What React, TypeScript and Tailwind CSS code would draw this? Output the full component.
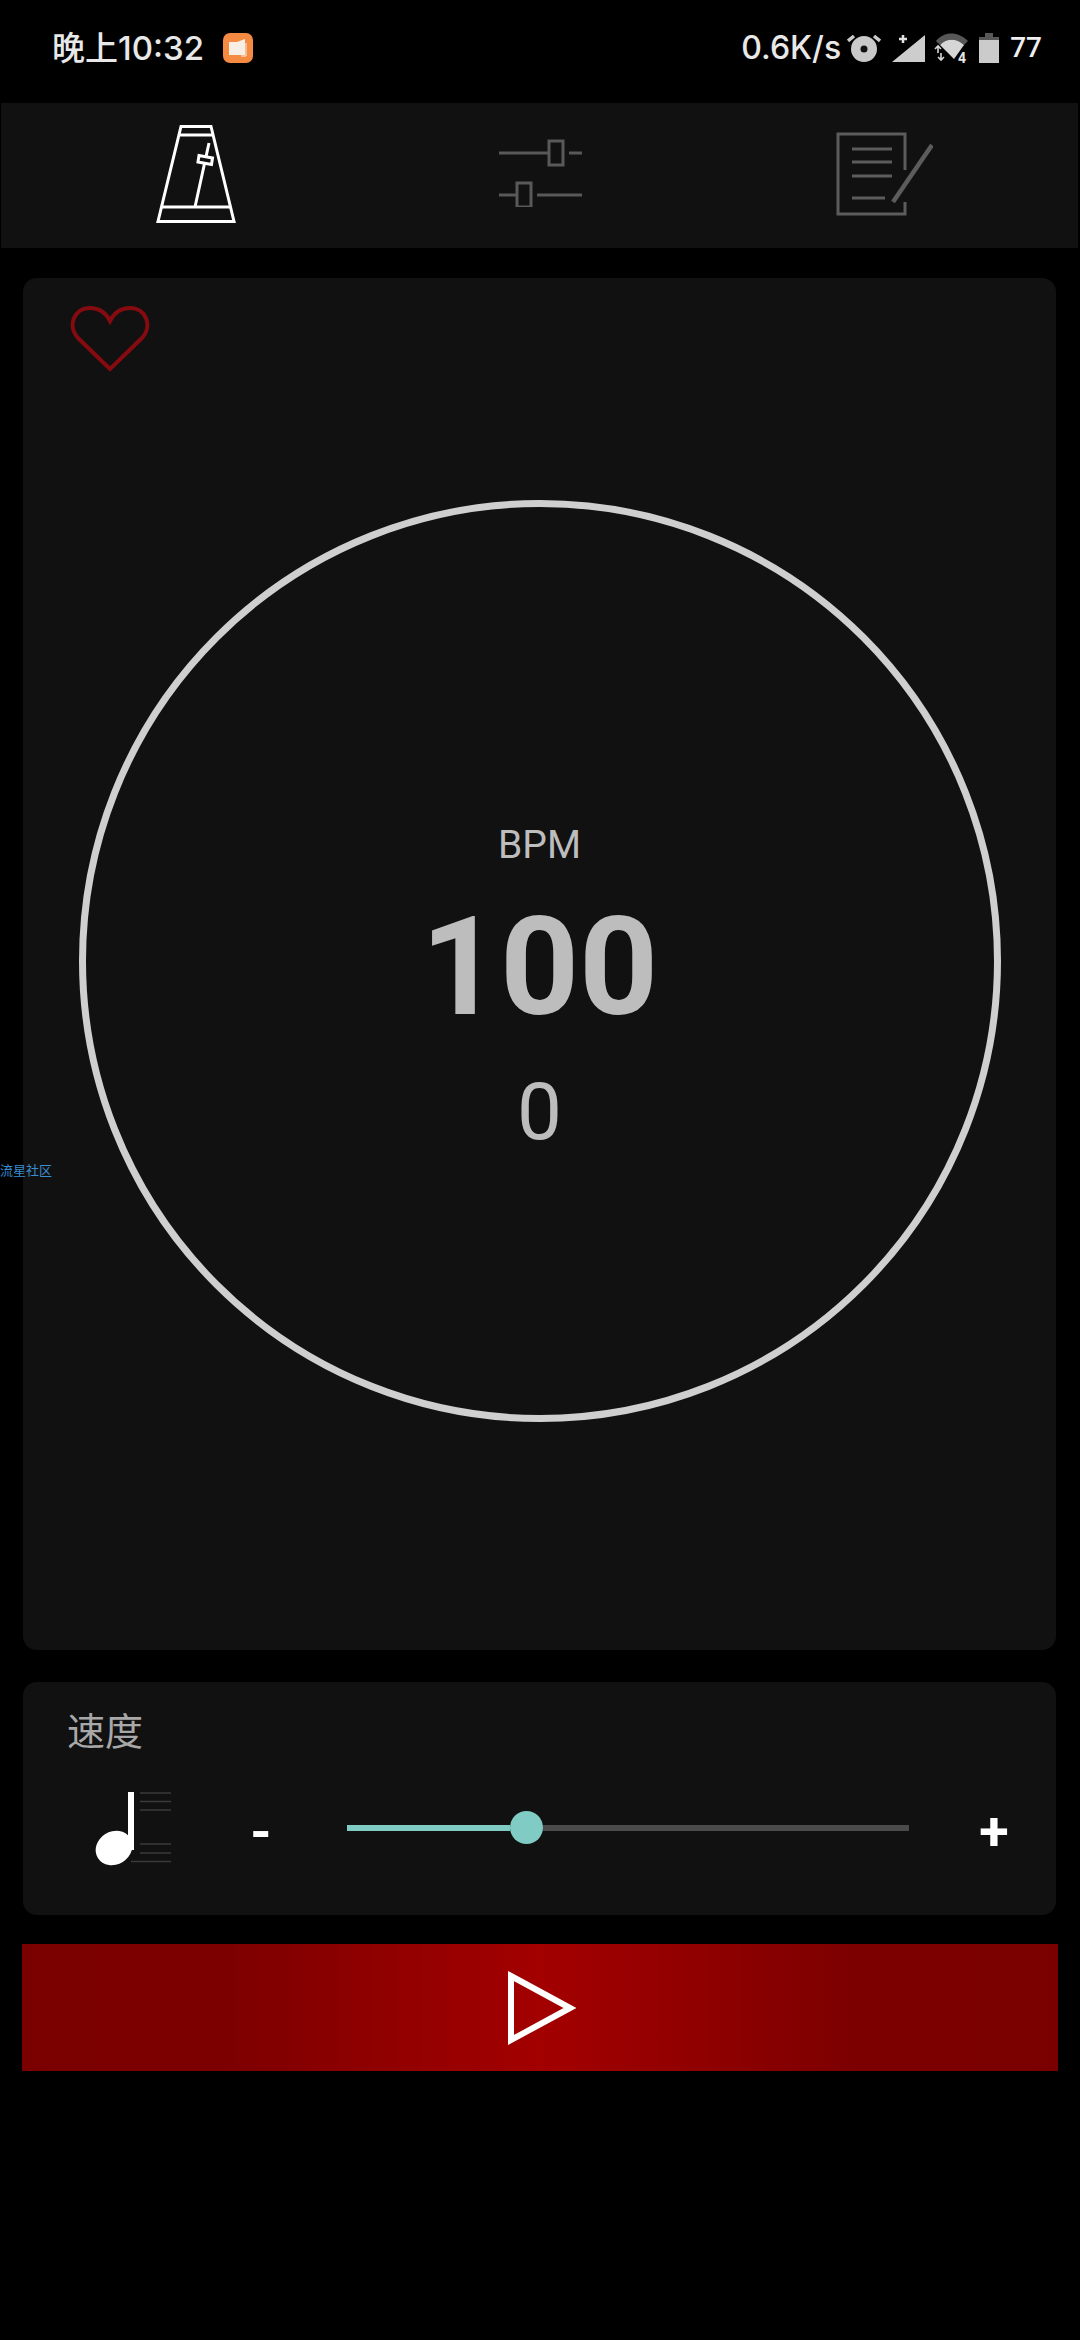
// App.tsx
export default function App() {
  return (
    <div className="relative w-[1080px] h-[2340px] bg-black overflow-hidden font-['Roboto',sans-serif]">
      <StatusBar />

      {/* Tabs */}
      <div className="flex items-center ml-[1px] mr-[2px] h-[145px] bg-[#111111]">
        <svg className="ml-[155px] mt-[-4px] shrink-0" width="80" height="98" viewBox="0 0 80 98" fill="none" stroke="#ffffff" strokeWidth="3">
          <path d="M25 1.5 H55 L78 96.5 H2 Z" />
          <path d="M23 10 H57 M6 82 H74 M39 82 L53 18" />
          <path d="M43 30.5 L56.5 33 L55.5 39.5 L42 37 Z" fill="#111111" />
        </svg>
        <svg className="ml-[263px] mt-[-5px] shrink-0" width="83" height="68" viewBox="0 0 83 68" fill="none" stroke="#595959" strokeWidth="3">
          <path d="M0 14 H50 M70 14 H83 M0 56 H17 M38 56 H83" />
          <rect x="50" y="2" width="14" height="24" />
          <rect x="18" y="44" width="14" height="24" />
        </svg>
        <svg className="ml-[254px] mt-[-4px] shrink-0" width="97" height="84" viewBox="0 0 97 84" fill="none" stroke="#5c5c5c" strokeWidth="3">
          <path d="M69 38 V2 H2 V82 H69 V70" />
          <path d="M16 17 H56 M16 30 H56 M16 44 H56 M16 66 H49" />
          <path d="M57 70 L96 13" strokeWidth="4.5" />
        </svg>
      </div>

      {/* Metronome dial */}
      <div className="flex flex-col mt-[30px] ml-[23px] w-[1033px] h-[1372px] rounded-[14px] bg-[#111111]">
        <svg className="ml-[47px] mt-[27px] shrink-0" width="80" height="68" viewBox="0 0 80 68" fill="none" stroke="#850b10" strokeWidth="4">
          <path d="M40 64 L8 33 C-3 21 4 3 20 3 C29 3 36 8 40 16 C44 8 51 3 60 3 C76 3 83 21 72 33 Z" />
        </svg>
        <div className="flex flex-col items-center mt-[127px] mx-auto w-[922px] h-[922px] rounded-full border-[7px] border-[#cfcfcf] text-[#bdbdbd]">
          <div className="mt-[315px] text-[39px] leading-[46px]">BPM</div>
          <div className="mt-[29px] text-[138px] leading-[140px] font-bold">100</div>
          <div className="mt-[35px] text-[80px] leading-[80px]">0</div>
        </div>
      </div>

      {/* Speed */}
      <div className="mt-[32px] ml-[23px] w-[1033px] h-[233px] rounded-[14px] bg-[#111111]">
        <div className="pt-[27px] pl-[44px] text-[38px] leading-[40px] text-[#a8a8a8] font-['Noto_Sans_CJK_SC',sans-serif]">速度</div>
        <div className="flex items-center mt-[43px] ml-[72px] h-[74px]">
          <NoteIcon />
          <div className="ml-[72px] mt-[6px] w-[36px] text-center text-[54px] leading-[54px] font-bold text-white">-</div>
          <div className="flex items-center ml-[68px] w-[562px] h-[33px] mt-[-3px]">
            <div className="w-[163px] h-[6px] bg-[#80cbc4]" />
            <div className="w-[33px] h-[33px] rounded-full bg-[#80cbc4] shrink-0" />
            <div className="flex-1 h-[6px] bg-[#4b4b4b]" />
          </div>
          <div className="ml-[61px] mt-[6px] w-[48px] text-center text-[54px] leading-[54px] font-bold text-white">+</div>
        </div>
      </div>

      {/* Play */}
      <div className="flex items-center justify-center mt-[29px] ml-[22px] w-[1036px] h-[127px] bg-[linear-gradient(90deg,#7a0000_0%,#7d0000_20%,#a30000_50%,#7d0000_80%,#7a0000_100%)]">
        <svg className="ml-[3px]" width="68" height="74" viewBox="0 0 68 74" fill="none" stroke="#ffffff" strokeWidth="6">
          <path d="M3 5 L62 37 L3 69 Z" />
        </svg>
      </div>

      <div className="absolute left-0 top-[1161px] text-[13px] leading-[18px] text-[#3b8ed0] font-['Noto_Sans_CJK_SC',sans-serif]">流星社区</div>
    </div>
  )
}

function StatusBar() {
  return (
    <div className="flex items-center h-[103px] pl-[52px] pr-[38px] pb-[7px] text-[#e8e8e8] font-['Inter','Noto_Sans_CJK_SC',sans-serif]">
      <div className="text-[33px] leading-[40px] font-medium">晚上10:32</div>
      <div className="flex items-center justify-center ml-[19px] w-[30px] h-[30px] rounded-[7px] bg-[#f58a42]">
        <svg width="20" height="20" viewBox="0 0 20 20">
          <path d="M1 4 L9 4 L17 1 V17 L9 17 H1 Z" fill="#f7efe6" />
          <path d="M13 18 H18 V5" fill="none" stroke="#f7efe6" strokeWidth="1" />
        </svg>
      </div>
      <div className="ml-auto text-[32px] leading-[40px] font-medium">0.6K/s</div>
      <svg className="ml-[6px]" width="34" height="28" viewBox="0 0 34 28">
        <circle cx="17" cy="15" r="13" fill="#c9c9c9" />
        <circle cx="17" cy="15" r="3.5" fill="#111111" />
        <path d="M1 7 L7 2 M33 7 L27 2" stroke="#c9c9c9" strokeWidth="3.5" />
      </svg>
      <svg className="ml-[11px]" width="33" height="28" viewBox="0 0 33 28">
        <path d="M0 28 L33 1 V28 Z" fill="#cdcdcd" />
        <path d="M11 1 V9 M7 5 H15" stroke="#e0e0e0" strokeWidth="2.5" />
      </svg>
      <svg className="ml-[8px]" width="37" height="32" viewBox="0 0 37 32" fill="none">
        <path d="M3 9 C11 -1 25 -1 35 9 L31 13 C24 6 13 6 7 13 Z" fill="#575757" />
        <path d="M7 13 C13 6 24 6 31 13 L21 27 Z" fill="#d6d6d6" />
        <path d="M5 15 V21 M2 17 L5 14 L8 17 M8 21 V27 M5 25 L8 28 L11 25" stroke="#d6d6d6" strokeWidth="1.6" />
        <text x="25" y="30.5" fontSize="14" fontWeight="700" fill="#e6e6e6" fontFamily="Roboto">4</text>
      </svg>
      <svg className="ml-[9px]" width="20" height="30" viewBox="0 0 20 30">
        <path d="M6 0 H14 V4 H20 V7 H0 V4 H6 Z" fill="#575757" />
        <rect x="0" y="7" width="20" height="23" fill="#cbcbcb" />
      </svg>
      <div className="ml-[11px] text-[28px] leading-[34px] font-medium font-['Roboto',sans-serif] text-[#efefef]">77</div>
    </div>
  )
}

function NoteIcon() {
  return (
    <svg className="shrink-0" width="76" height="74" viewBox="0 0 76 74" fill="none">
      <path d="M45 1 H76 M45 9.5 H76 M45 18 H76 M45 52 H76 M45 61 H76 M36 69.5 H76" stroke="#3a3a3a" strokeWidth="1.5" />
      <rect x="33" y="0" width="6" height="58" fill="#ffffff" />
      <ellipse cx="19" cy="56" rx="19" ry="16.5" transform="rotate(-32 19 56)" fill="#ffffff" />
    </svg>
  )
}
